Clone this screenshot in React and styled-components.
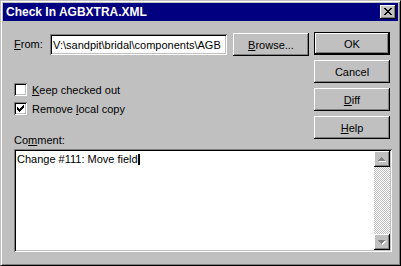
import React from 'react'
import styled, { createGlobalStyle, css } from 'styled-components'

const GlobalStyle = createGlobalStyle`
  html, body {
    margin: 0;
    padding: 0;
    background: #c0c0c0;
  }
  body {
    font-family: "Liberation Sans", Arial, sans-serif;
    font-size: 11px;
    color: #000;
  }
`

const raised = css`
  box-shadow: inset -1px -1px #000, inset 1px 1px #fff, inset -2px -2px #808080;
`

const sunken = css`
  box-shadow: inset 1px 1px #808080, inset -1px -1px #fff, inset 2px 2px #000,
    inset -2px -2px #c0c0c0;
`

const Window = styled.div`
  width: 401px;
  height: 266px;
  box-sizing: border-box;
  background: #c0c0c0;
  border: 1px solid;
  border-color: #c0c0c0 #000 #000 #c0c0c0;
  box-shadow: inset 1px 1px #fff, inset -1px -1px #808080;
  padding: 2px;
  display: flex;
  flex-direction: column;
`

const TitleBar = styled.div`
  height: 18px;
  flex: none;
  background: #000080;
  color: #fff;
  display: flex;
  align-items: center;
  justify-content: space-between;
  padding: 0 2px 0 3px;
  font-size: 12px;
  font-weight: bold;
`

const CloseButton = styled.div`
  width: 16px;
  height: 14px;
  background: #c0c0c0;
  ${raised};
  display: flex;
  align-items: center;
  justify-content: center;
  padding-bottom: 1px;
  box-sizing: border-box;
`

const Body = styled.div`
  flex: 1;
  display: flex;
  flex-direction: column;
  padding: 11px 6px 11px 11px;
`

const Top = styled.div`
  display: flex;
  justify-content: space-between;
`

const LeftCol = styled.div`
  display: flex;
  flex-direction: column;
`

const FromRow = styled.div`
  display: flex;
  align-items: center;
  height: 23px;
  margin-top: 1px;
`

const Label = styled.div`
  width: ${({ $w }) => $w || 'auto'};
  line-height: 13px;
  margin-top: ${({ $mt }) => $mt || 0};
`

const TextInput = styled.div`
  width: 177px;
  height: 21px;
  box-sizing: border-box;
  background: #fff;
  ${sunken};
  padding: 0 2px 0 3px;
  display: flex;
  align-items: center;
  overflow: hidden;
  white-space: nowrap;
`

const Button = styled.div`
  width: 76px;
  height: 23px;
  box-sizing: border-box;
  background: #c0c0c0;
  ${raised};
  display: flex;
  align-items: center;
  justify-content: center;
  margin-left: ${({ $ml }) => $ml || 0};
  flex: none;
  ${({ $default }) =>
    $default &&
    css`
      box-shadow: inset 0 0 0 1px #000, inset -2px -2px #000, inset 2px 2px #fff,
        inset -3px -3px #808080;
    `}
`

const RightCol = styled.div`
  display: flex;
  flex-direction: column;
  gap: 5px;
  margin-right: 2px;
`

const CheckRow = styled.div`
  display: flex;
  align-items: center;
  height: 13px;
  margin-top: ${({ $mt }) => $mt};
`

const CheckBox = styled.div`
  width: 13px;
  height: 13px;
  box-sizing: border-box;
  background: #fff;
  ${sunken};
  margin-right: 5px;
  display: flex;
  align-items: center;
  justify-content: center;
`

const Memo = styled.div`
  flex: 1;
  margin-top: 2px;
  background: #fff;
  ${sunken};
  padding: 2px;
  display: flex;
`

const MemoText = styled.div`
  flex: 1;
  padding: 2px 0 0 1px;
  line-height: 13px;
  display: flex;
  align-items: flex-start;
`

const Caret = styled.span`
  display: inline-block;
  width: 2px;
  height: 11px;
  background: #000;
  margin-top: 1px;
`

const ScrollBar = styled.div`
  width: 16px;
  display: flex;
  flex-direction: column;
`

const ScrollButton = styled.div`
  height: 16px;
  background: #c0c0c0;
  ${raised};
  display: flex;
  align-items: center;
  justify-content: center;
`

const Track = styled.div`
  flex: 1;
  background: repeating-conic-gradient(#c0c0c0 0 25%, #fff 0 50%) 0 0 / 2px 2px;
`

const CloseGlyph = () => (
  <svg width="8" height="7" viewBox="0 0 8 7" shapeRendering="crispEdges">
    <path
      d="M0 0h2v1H0zM6 0h2v1H6zM1 1h2v1H1zM5 1h2v1H5zM2 2h4v1H2zM3 3h2v1H3zM2 4h4v1H2zM1 5h2v1H1zM5 5h2v1H5zM0 6h2v1H0zM6 6h2v1H6z"
      fill="#000"
    />
  </svg>
)

const CheckGlyph = () => (
  <svg width="7" height="7" viewBox="0 0 7 7" shapeRendering="crispEdges">
    <path
      d="M6 0h1v1H6zM5 1h2v1H5zM0 2h1v1H0zM4 2h3v1H4zM0 3h2v1H0zM3 3h3v1H3zM0 4h5v1H0zM1 5h3v1H1zM2 6h1v1H2z"
      fill="#000"
    />
  </svg>
)

const Arrow = ({ down }) => (
  <svg width="8" height="5" viewBox="0 0 8 5" shapeRendering="crispEdges">
    {down ? (
      <>
        <path d="M1 1h7v1H1zM2 2h5v1H2zM3 3h3v1H3zM4 4h1v1H4z" fill="#fff" />
        <path d="M0 0h7v1H0zM1 1h5v1H1zM2 2h3v1H2zM3 3h1v1H3z" fill="#808080" />
      </>
    ) : (
      <>
        <path d="M4 1h1v1H4zM3 2h3v1H3zM2 3h5v1H2zM1 4h7v1H1z" fill="#fff" />
        <path d="M3 0h1v1H3zM2 1h3v1H2zM1 2h5v1H1zM0 3h7v1H0z" fill="#808080" />
      </>
    )}
  </svg>
)

const App = () => (
  <>
    <GlobalStyle />
    <Window>
      <TitleBar>
        <span>Check In AGBXTRA.XML</span>
        <CloseButton>
          <CloseGlyph />
        </CloseButton>
      </TitleBar>
      <Body>
        <Top>
          <LeftCol>
            <FromRow>
              <Label $w="36px">
                <u>F</u>rom:
              </Label>
              <TextInput>V:\sandpit\bridal\components\AGB</TextInput>
              <Button $ml="6px">
                <span>
                  <u>B</u>rowse...
                </span>
              </Button>
            </FromRow>
            <CheckRow $mt="27px">
              <CheckBox />
              <span>
                <u>K</u>eep checked out
              </span>
            </CheckRow>
            <CheckRow $mt="6px">
              <CheckBox>
                <CheckGlyph />
              </CheckBox>
              <span>
                Remove <u>l</u>ocal copy
              </span>
            </CheckRow>
            <Label $mt="19px">
              Co<u>m</u>ment:
            </Label>
          </LeftCol>
          <RightCol>
            <Button $default>OK</Button>
            <Button>Cancel</Button>
            <Button>
              <span>
                <u>D</u>iff
              </span>
            </Button>
            <Button>
              <span>
                <u>H</u>elp
              </span>
            </Button>
          </RightCol>
        </Top>
        <Memo>
          <MemoText>
            <span>Change #111: Move field</span>
            <Caret />
          </MemoText>
          <ScrollBar>
            <ScrollButton>
              <Arrow />
            </ScrollButton>
            <Track />
            <ScrollButton>
              <Arrow down />
            </ScrollButton>
          </ScrollBar>
        </Memo>
      </Body>
    </Window>
  </>
)

export default App
